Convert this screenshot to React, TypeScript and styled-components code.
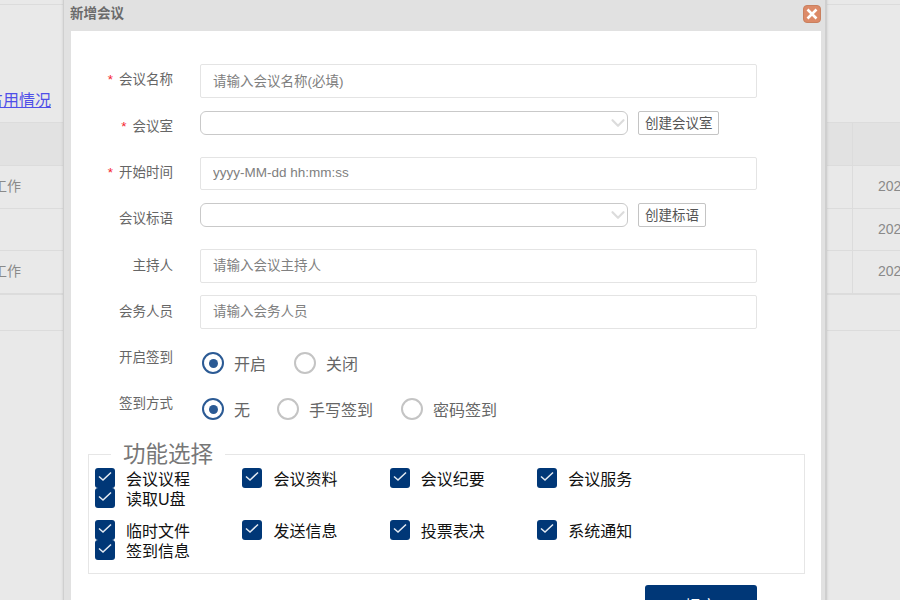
import { ChevronDown } from 'lucide-react';
import styled, { createGlobalStyle } from 'styled-components';

const GlobalStyle = createGlobalStyle`
  html, body {
    margin: 0;
    padding: 0;
    background: #e9e9e9;
  }
  body {
    font-family: "Liberation Sans", "Noto Sans CJK SC", sans-serif;
  }
`;

const Page = styled.div`
  position: relative;
  width: 900px;
  height: 600px;
  overflow: hidden;
  background: #e9e9e9;
`;

const TopRule = styled.div`
  height: 4px;
  border-bottom: 1px solid #dcdcdc;
`;

const LinkRow = styled.div`
  height: 117px;
  box-sizing: border-box;
  display: flex;
  align-items: flex-end;
  padding-bottom: 10px;
  margin-left: -13px;
`;

const PageLink = styled.a`
  color: #4f4fe8;
  font-size: 16px;
  line-height: 22px;
  text-decoration: underline;
`;

const Table = styled.div`
  border-top: 1px solid #dcdcdc;
`;

const TableRow = styled.div<{ $head?: boolean; $height: number; $thick?: boolean }>`
  display: grid;
  grid-template-columns: 852px 48px;
  height: ${(p) => p.$height}px;
  box-sizing: border-box;
  background: ${(p) => (p.$head ? '#e2e2e2' : '#e9e9e9')};
  border-bottom: ${(p) => (p.$thick ? 2 : 1)}px solid #dcdcdc;
  font-size: 14px;
  line-height: 40px;
  color: #8a8a8a;
`;

const Cell = styled.div`
  white-space: nowrap;
  margin-left: -7px;
`;

const DateCell = styled.div`
  border-left: 1px solid #dcdcdc;
  padding-left: 25px;
  white-space: nowrap;
  overflow: hidden;
`;

const BottomBand = styled.div`
  height: 35px;
  border-bottom: 1px solid #dcdcdc;
`;

const Modal = styled.div`
  position: absolute;
  left: 63px;
  top: -8px;
  width: 764px;
  height: 640px;
  box-sizing: border-box;
  padding: 0 4px 0 7px;
  background: #e1e1e1;
  border-left: 1px solid #cfcfcf;
  border-right: 2px solid #cfcfcf;
  border-radius: 4px 4px 0 0;
  box-shadow: 0 0 3px rgba(0, 0, 0, 0.12);
`;

const TitleBar = styled.div`
  height: 39px;
  box-sizing: border-box;
  padding-top: 5px;
  display: flex;
  align-items: center;
  justify-content: space-between;
`;

const Title = styled.div`
  font-size: 13.5px;
  font-weight: 700;
  color: #6b6b6b;
  margin: 0 0 4px -1px;
`;

const CloseButton = styled.div`
  width: 18px;
  height: 18px;
  border-radius: 4px;
  background: #dc8a68;
  border: 1px solid #c9805f;
  box-sizing: border-box;
  display: flex;
  align-items: center;
  justify-content: center;
`;

const Body = styled.div`
  background: #fff;
  padding-top: 33px;
  height: 600px;
  box-sizing: border-box;
`;

const FormRow = styled.div<{ $height: number }>`
  display: flex;
  align-items: flex-start;
  height: ${(p) => p.$height}px;
`;

const Label = styled.div<{ $low?: boolean }>`
  width: 102px;
  height: 34px;
  margin-right: 27px;
  text-align: right;
  font-size: 13.5px;
  line-height: ${(p) => (p.$low ? 34 : 32)}px;
  color: #666;
  flex-shrink: 0;
`;

const Star = styled.span`
  color: #f5222d;
  margin-right: 6px;
`;

const TextInput = styled.input<{ $lift?: boolean }>`
  width: 557px;
  height: 34px;
  box-sizing: border-box;
  border: 1px solid #e4e4e4;
  border-radius: 2px;
  padding: 0 12px ${(p) => (p.$lift ? 2 : 0)}px;
  font: inherit;
  font-size: 13.5px;
  color: #666;
  outline: none;

  &::placeholder {
    color: #808080;
    opacity: 1;
  }
`;

const DateInput = styled(TextInput)`
  height: 33px;
`;

const SelectBox = styled.div`
  width: 428px;
  height: 24px;
  box-sizing: border-box;
  border: 1px solid #c9c9c9;
  border-radius: 6px;
  display: flex;
  align-items: center;
  justify-content: flex-end;
  color: #dcdcdc;
`;

const SelectArrow = styled(ChevronDown)`
  margin-right: -2px;
`;

const SmallButton = styled.div`
  margin-left: 10px;
  height: 24px;
  box-sizing: border-box;
  padding: 0 5.5px 0 6px;
  border: 1px solid #c4c4c4;
  border-radius: 2px;
  font-size: 13.5px;
  line-height: 24px;
  color: #555;
`;

const RadioGroup = styled.div`
  display: flex;
  align-items: center;
  height: 34px;
  margin-top: 5px;
  margin-left: 2px;
`;

const RadioItem = styled.div<{ $gap: number }>`
  display: flex;
  align-items: center;
  margin-right: ${(p) => p.$gap}px;
  font-size: 16px;
  color: #666;
`;

const RadioCircle = styled.span<{ $on?: boolean }>`
  width: 22px;
  height: 22px;
  box-sizing: border-box;
  border-radius: 50%;
  border: 2px solid ${(p) => (p.$on ? '#2b5a94' : '#c4c4c4')};
  margin-right: 10px;
  display: flex;
  align-items: center;
  justify-content: center;

  &::after {
    content: '';
    display: ${(p) => (p.$on ? 'block' : 'none')};
    width: 9px;
    height: 9px;
    border-radius: 50%;
    background: #2b5a94;
  }
`;

const Fieldset = styled.fieldset`
  margin: 0 0 0 17px;
  padding: 0 6px;
  width: 717px;
  height: 135px;
  box-sizing: border-box;
  border: 1px solid #e6e6e6;
`;

const Legend = styled.legend`
  margin: 0 0 -1px 16px;
  padding: 2px 12px 0;
  font-size: 22.5px;
  line-height: 28px;
  color: #777;
`;

const CheckGroup = styled.div`
  display: grid;
  grid-template-columns: repeat(4, 147.4px);
  grid-auto-rows: 20px;
  margin-bottom: 12px;
`;

const CheckItem = styled.div`
  display: flex;
  align-items: center;
  font-size: 16px;
  color: #111;
`;

const CheckBox = styled.span`
  width: 20px;
  height: 20px;
  margin-right: 11px;
  border-radius: 3px;
  background: #003777;
  display: flex;
  align-items: center;
  justify-content: center;
`;

const Footer = styled.div`
  display: flex;
  justify-content: flex-end;
  margin: 11px 64px 0 0;
`;

const SaveButton = styled.div`
  width: 112px;
  height: 44px;
  border-radius: 3px 3px 0 0;
  background: #003777;
  color: #fff;
  font-size: 16px;
  line-height: 44px;
  text-align: center;
`;

const Check = () => (
  <svg width="14" height="14" viewBox="0 0 14 14" fill="none">
    <path d="M1 5.5 L5 9 L13 1.5" stroke="#e4ebf3" strokeWidth="1.5" />
  </svg>
);

const checkGroups = [
  ['会议议程', '会议资料', '会议纪要', '会议服务', '读取U盘'],
  ['临时文件', '发送信息', '投票表决', '系统通知', '签到信息'],
];

export default function App() {
  return (
    <Page>
      <GlobalStyle />
      <TopRule />
      <LinkRow>
        <PageLink href="#">占用情况</PageLink>
      </LinkRow>
      <Table>
        <TableRow $head $height={43}>
          <Cell />
          <DateCell />
        </TableRow>
        <TableRow $height={43}>
          <Cell>工作</Cell>
          <DateCell>2021</DateCell>
        </TableRow>
        <TableRow $height={42}>
          <Cell />
          <DateCell>2021</DateCell>
        </TableRow>
        <TableRow $height={44} $thick>
          <Cell>工作</Cell>
          <DateCell>2021</DateCell>
        </TableRow>
      </Table>
      <BottomBand />

      <Modal>
        <TitleBar>
          <Title>新增会议</Title>
          <CloseButton>
            <svg width="14" height="14" viewBox="0 0 14 14">
              <path d="M2.5 2.5 L11.5 11.5 M11.5 2.5 L2.5 11.5" stroke="#fff" strokeWidth="2.6" />
            </svg>
          </CloseButton>
        </TitleBar>
        <Body>
          <FormRow $height={47}>
            <Label><Star>*</Star>会议名称</Label>
            <TextInput placeholder="请输入会议名称(必填)" />
          </FormRow>
          <FormRow $height={46}>
            <Label><Star>*</Star>会议室</Label>
            <SelectBox><SelectArrow size={22} strokeWidth={2.4} /></SelectBox>
            <SmallButton>创建会议室</SmallButton>
          </FormRow>
          <FormRow $height={46}>
            <Label><Star>*</Star>开始时间</Label>
            <DateInput $lift placeholder="yyyy-MM-dd hh:mm:ss" />
          </FormRow>
          <FormRow $height={46}>
            <Label>会议标语</Label>
            <SelectBox><SelectArrow size={22} strokeWidth={2.4} /></SelectBox>
            <SmallButton>创建标语</SmallButton>
          </FormRow>
          <FormRow $height={46}>
            <Label $low>主持人</Label>
            <TextInput $lift placeholder="请输入会议主持人" />
          </FormRow>
          <FormRow $height={46}>
            <Label $low>会务人员</Label>
            <TextInput $lift placeholder="请输入会务人员" />
          </FormRow>
          <FormRow $height={46}>
            <Label $low>开启签到</Label>
            <RadioGroup>
              <RadioItem $gap={28}><RadioCircle $on />开启</RadioItem>
              <RadioItem $gap={27}><RadioCircle />关闭</RadioItem>
            </RadioGroup>
          </FormRow>
          <FormRow $height={52}>
            <Label $low>签到方式</Label>
            <RadioGroup>
              <RadioItem $gap={27}><RadioCircle $on />无</RadioItem>
              <RadioItem $gap={28}><RadioCircle />手写签到</RadioItem>
              <RadioItem $gap={27}><RadioCircle />密码签到</RadioItem>
            </RadioGroup>
          </FormRow>
          <Fieldset>
            <Legend>功能选择</Legend>
            {checkGroups.map((group) => (
              <CheckGroup key={group[0]}>
                {group.map((name) => (
                  <CheckItem key={name}>
                    <CheckBox><Check /></CheckBox>
                    {name}
                  </CheckItem>
                ))}
              </CheckGroup>
            ))}
          </Fieldset>
          <Footer>
            <SaveButton>提交</SaveButton>
          </Footer>
        </Body>
      </Modal>
    </Page>
  );
}
